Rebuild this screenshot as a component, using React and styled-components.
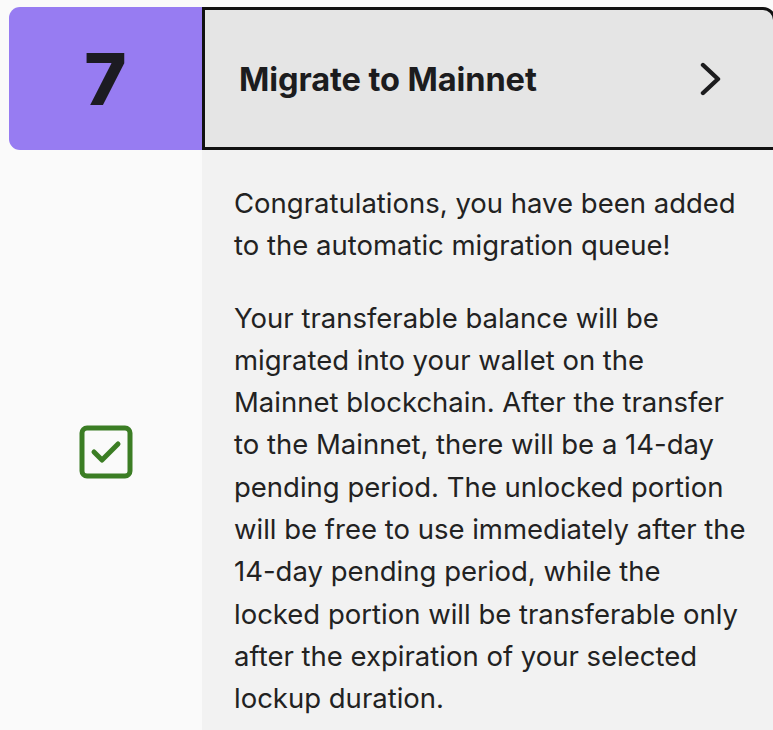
import React from "react";
import styled, { createGlobalStyle } from "styled-components";

const Global = createGlobalStyle`
  html, body { margin: 0; padding: 0; background: #fafafa; overflow: hidden; }
  body { font-family: Inter, "Noto Sans", sans-serif; color: #1c1c1e; }
`;

const Page = styled.div`
  width: 776px;
  display: flex;
  flex-direction: column;
  padding-top: 7px;
`;

const HeaderRow = styled.div`
  display: flex;
  height: 143px;
`;

const StepBadge = styled.div`
  width: 193px;
  margin-left: 9px;
  background: #977cf2;
  border-radius: 11px 0 0 11px;
  display: flex;
  align-items: center;
  justify-content: center;
  font-size: 72px;
  font-weight: 800;
  color: #1c1b22;
`;

const StepHeader = styled.div`
  flex: 1;
  box-sizing: border-box;
  border: 3px solid #111;
  border-radius: 0 13px 0 0;
  background: #e5e5e5;
  display: flex;
  align-items: center;
  justify-content: space-between;
  padding: 0 50px 0 34px;
`;

const Title = styled.h2`
  margin: 0;
  font-size: 32.6px;
  font-weight: 700;
  color: #1c1c1e;
  letter-spacing: -0.1px;
`;

const BodyRow = styled.div`
  display: flex;
  align-items: center;
`;

const StatusCol = styled.div`
  width: 193px;
  margin-left: 9px;
  display: flex;
  justify-content: center;
`;

const Content = styled.div`
  flex: 1;
  background: #f2f2f2;
  padding: 32px 22px 34px 32px;
`;

const Para = styled.p`
  margin: 0 0 30px;
  font-size: 27.5px;
  line-height: 42.3px;
  color: #222;
  &:last-child { margin-bottom: 0; }
`;

const Chevron = () => (
  <svg width="24" height="34" viewBox="0 0 24 34" fill="none">
    <path d="M4 3 L19 17 L4 31" stroke="#1c1c1e" strokeWidth="4.4" strokeLinecap="round" strokeLinejoin="round" />
  </svg>
);

const CheckBox = () => (
  <svg width="54" height="54" viewBox="0 0 54 54" fill="none">
    <rect x="3" y="3" width="48" height="48" rx="5" stroke="#3b7d24" strokeWidth="5" fill="#fafafa" />
    <path d="M15 27 L23 35 L39 19" stroke="#3b7d24" strokeWidth="5" strokeLinecap="round" strokeLinejoin="round" />
  </svg>
);

export default function App() {
  return (
    <>
      <Global />
      <Page>
        <HeaderRow>
          <StepBadge>7</StepBadge>
          <StepHeader>
            <Title>Migrate to Mainnet</Title>
            <Chevron />
          </StepHeader>
        </HeaderRow>
        <BodyRow>
          <StatusCol>
            <CheckBox />
          </StatusCol>
          <Content>
            <Para>Congratulations, you have been added to the automatic migration queue!</Para>
            <Para>
              Your transferable balance will be migrated into your wallet on the Mainnet blockchain. After the transfer to the Mainnet, there will be a 14-day pending period. The unlocked portion will be free to use immediately after the 14-day pending period, while the locked portion will be transferable only after the expiration of your selected lockup duration.
            </Para>
          </Content>
        </BodyRow>
      </Page>
    </>
  );
}
